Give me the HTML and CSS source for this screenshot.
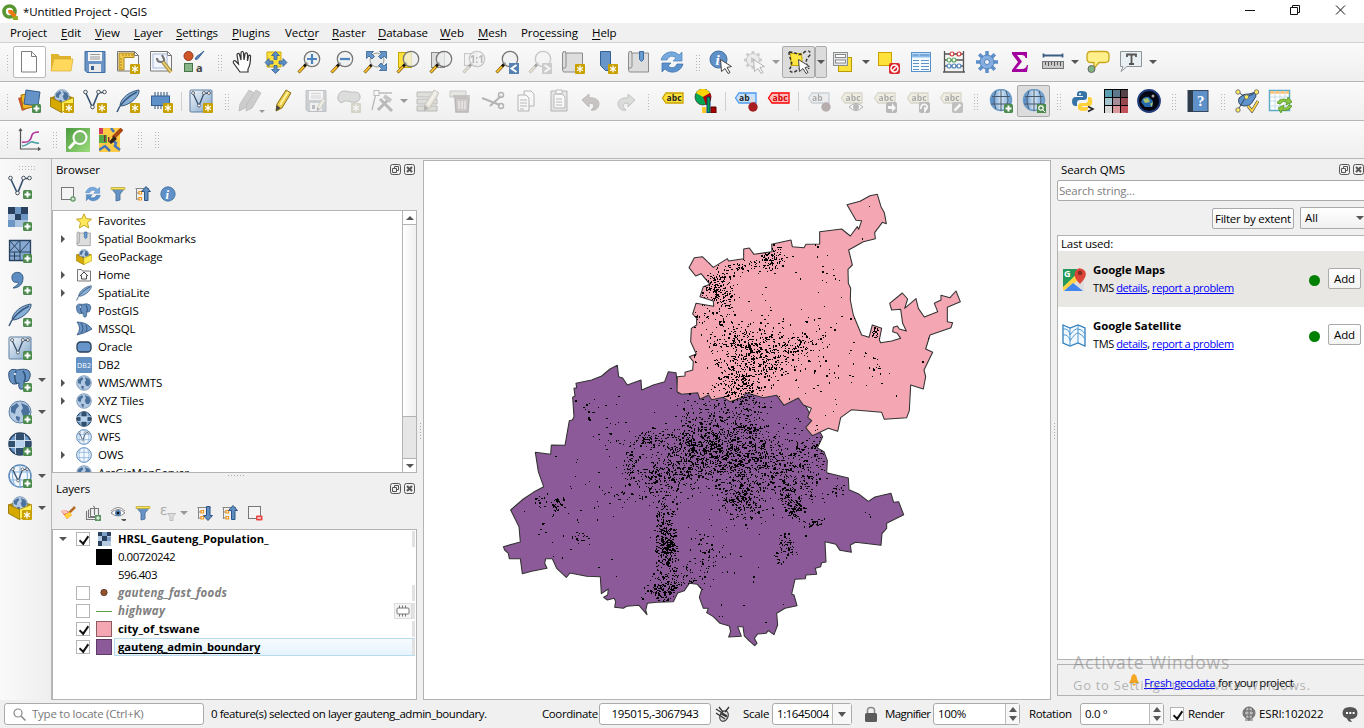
FILE: index.html
```html
<!DOCTYPE html>
<html lang="en">
<head>
<meta charset="utf-8">
<title>*Untitled Project - QGIS</title>
<link rel="stylesheet" href="styles.css">
</head>
<body>
<svg class="defs" aria-hidden="true">
<defs>
<linearGradient id="gGreen" x1="0" y1="0" x2="1" y2="1"><stop offset="0" stop-color="#4b9a3f"/><stop offset="1" stop-color="#9bdc7c"/></linearGradient>
<linearGradient id="gBlue" x1="0" y1="0" x2="1" y2="1"><stop offset="0" stop-color="#f4f8fb"/><stop offset="1" stop-color="#7fa3c8"/></linearGradient>
<linearGradient id="gGlobe"><stop offset="0" stop-color="#3f7fc4"/><stop offset=".5" stop-color="#d9e6f2"/><stop offset="1" stop-color="#5f9ad6"/></linearGradient>
</defs>
<symbol id="star" viewBox="0 0 24 24"><rect x="14" y="14" width="10" height="10" rx="1" fill="#c8a100"/><path d="M19 15.500v7M16 17.200l6 3.600M16 20.800l6-3.600" stroke="#fff" stroke-width="1.300"/></symbol>
<symbol id="plus" viewBox="0 0 24 24"><rect x="15" y="15" width="9" height="9" rx="1.500" fill="#4d8a4d"/><path d="M19.500 16.500v6M16.500 19.500h6" stroke="#fff" stroke-width="2"/></symbol>
<symbol id="new" viewBox="0 0 24 24"><path d="M4.500 1.500h10l5 5v15.500h-15z" fill="#fff" stroke="#7d7d7d"/><path d="M14.500 1.500v5h5" fill="none" stroke="#7d7d7d"/></symbol>
<symbol id="open" viewBox="0 0 24 24"><path d="M1 21V4h7l2 2h11v15z" fill="#e0b32f"/><path d="M1 21L4 9h19l-2 12z" fill="#ffd85c" stroke="#d9ae30" stroke-width=".7"/></symbol>
<symbol id="save" viewBox="0 0 24 24"><path d="M2 1.500h20v21H4l-2-2z" fill="#6b94c4" stroke="#3e6da3"/><rect x="5" y="2" width="14" height="9" fill="#f4f4f4"/><path d="M7 4.500h10M7 7h10M7 9h10" stroke="#999"/><rect x="6" y="14" width="12" height="8" fill="#e9e9e9"/><rect x="8" y="16" width="3" height="4" fill="#345f90"/></symbol>
<symbol id="page" viewBox="0 0 24 24"><path d="M1.500 1.500h17l4 4v15.500h-21z" fill="#f8f9fb" stroke="#777"/><path d="M18.500 1.500v4h4" fill="none" stroke="#777"/></symbol>
<symbol id="layoutnew" viewBox="0 0 24 24"><use href="#page"/><path d="M3 3h15v4.500H8V20H3z" fill="#f2c94a" stroke="#a9861f"/><path d="M7 4v2M10 4v2M13 4v2M16 4v2M4 9h2M4 12h2M4 15h2M4 18h2" stroke="#8a6c12" stroke-width=".7"/><use href="#star"/></symbol>
<symbol id="layoutmgr" viewBox="0 0 24 24"><use href="#page"/><rect x="4" y="4" width="14" height="14" fill="#f3f6ff" stroke="#a7b8d6"/><path d="M8 8q0 4 4 4t3-3l-2-4" fill="none" stroke="#777" stroke-width="2.200"/><path d="M14 12l8 10" stroke="#a78d3b" stroke-width="4"/><path d="M14 12l8 10" stroke="#e7cd76" stroke-width="2"/></symbol>
<symbol id="style" viewBox="0 0 24 24"><circle cx="6.500" cy="6" r="4.500" fill="#cf5428" stroke="#903414"/><path d="M13 9c2-3 2-3 4-4l5-4-4 5c-2 3-3 4-5 3" fill="#5586bd" stroke="#315f92"/><rect x="2.500" y="13.500" width="8" height="8" fill="#87b588" stroke="#44754a"/><text x="14" y="22" font-size="11" fill="#444">a</text></symbol>
<symbol id="hand" viewBox="0 0 24 24"><path d="M9 22L2.500 13c-1-2 1-3 2-2l3 3L6 5c0-2 2-2 2.500-.5L10 10V3c0-2 2.500-2 2.500 0l.5 7 1-6c.5-2 2.500-1 2.500.5L16.500 11l1-5c1-1.500 2.500-.5 2 1 0 4 0 8-2.500 12v3H9z" fill="#fff" stroke="#333" stroke-width="1.200"/></symbol>
<symbol id="pansel" viewBox="0 0 24 24"><path d="M3 2h14v15H3z" fill="#ffe13b" stroke="#cba800"/><path d="M11.500 1.500l4 4H13v4h-3v-4H7.500zM23 12.500l-4 4V14h-4v-3h4V8.500zM11.500 23.500l-4-4H10v-4h3v4h2.500zM1 12.500l4-4V11h4v3H5v2.500z" fill="#5d8fc7" stroke="#35618f" stroke-width=".8"/></symbol>
<symbol id="lens" viewBox="0 0 24 24"><path d="M9.500 14L1.500 22.500" stroke="#6b4c00" stroke-width="3"/><path d="M8.500 15L1.800 22.200" stroke="#ffc42e" stroke-width="1.800"/><path d="M10.500 12.500L7 16.500" stroke="#111" stroke-width="2.500"/><circle cx="15" cy="9" r="7.700" fill="#edf0ef" fill-opacity=".75" stroke="#777" stroke-width="1.300"/></symbol>
<symbol id="zoomin" viewBox="0 0 24 24"><use href="#lens"/><path d="M15 4v10M10 9h10" stroke="#4f83bd" stroke-width="2.200"/></symbol>
<symbol id="zoomout" viewBox="0 0 24 24"><use href="#lens"/><path d="M10 9h10" stroke="#4f83bd" stroke-width="2.200"/></symbol>
<symbol id="zoomfull" viewBox="0 0 24 24"><path d="M8.500 15L1.500 22.500" stroke="#6b4c00" stroke-width="3"/><path d="M8 15.500L1.800 22.200" stroke="#ffc42e" stroke-width="1.800"/><path d="M10.500 12.500L7 16.500" stroke="#111" stroke-width="2.500"/><circle cx="14" cy="10" r="7" fill="#eceeee" stroke="#999"/><path d="M3.500 1.500h7L8.500 3.500l3 3-2.500 2.500-3-3-2.500 2.500zM23.500 1.500h-7l2 2-3 3 2.500 2.500 3-3 2.500 2.500zM23.500 20.500h-7l2-2-3-3 2.500-2.500 3 3 2.500-2.500z" fill="#6594c9" stroke="#34618f" stroke-width=".8"/></symbol>
<symbol id="zoomsel" viewBox="0 0 24 24"><rect x="2.500" y="2.500" width="13" height="15" fill="#ffe13b" stroke="#c7a400"/><use href="#lens"/></symbol>
<symbol id="zoomlayer" viewBox="0 0 24 24"><rect x="2.500" y="2.500" width="13" height="15" fill="#ddd" stroke="#888"/><use href="#lens"/></symbol>
<symbol id="native" viewBox="0 0 24 24"><rect x="2.500" y="3.500" width="12" height="12" fill="#eee" stroke="#777"/><use href="#lens"/><text x="8" y="13" font-size="10" font-weight="bold" fill="#444" textLength="14">1:1</text></symbol>
<symbol id="zoomlast" viewBox="0 0 24 24"><use href="#lens"/><rect x="14" y="13" width="10" height="11" fill="#5581b2"/><path d="M21.500 15l-5 3.500 5 3.500" fill="none" stroke="#fff" stroke-width="2"/></symbol>
<symbol id="zoomnext" viewBox="0 0 24 24"><use href="#lens"/><rect x="14" y="13" width="10" height="11" fill="#888"/><path d="M16.500 15l5 3.500-5 3.500" fill="none" stroke="#fff" stroke-width="2"/></symbol>
<symbol id="book" viewBox="0 0 24 24"><path d="M1.500 4q0-3 2-2.500h1V3h17v19h-19q-1-1-1-3z" fill="#ddd" stroke="#8b8b8b"/><path d="M5 3v13.500q0 1.500-2 1.500-1.500 0-1.500 1.500" fill="none" stroke="#8b8b8b"/></symbol>
<symbol id="mapview" viewBox="0 0 24 24"><use href="#book"/><use href="#star"/></symbol>
<symbol id="bmnew" viewBox="0 0 24 24"><path d="M6.500 1.500h10v19h-5l-5-5z" fill="#6795c9" stroke="#345f91"/><use href="#star"/></symbol>
<symbol id="bookmarks" viewBox="0 0 24 24"><use href="#book"/><path d="M12.500 1.500h4v8l-2 2-2-2z" fill="#679bd1" stroke="#3a6c9f"/></symbol>
<symbol id="refresh" viewBox="0 0 24 24"><path d="M1 10C3 2 13-1 19 5l3-3v9h-9l3-3c-4-3-7-2-9 2z" fill="#77a9dc" stroke="#4a82ba" stroke-width=".7"/><path d="M23 14c-2 8-12 11-18 5l-3 3v-9h9l-3 3c4 3 7 2 9-2z" fill="#5c92cc" stroke="#376fa9" stroke-width=".7"/></symbol>
<symbol id="cursor" viewBox="0 0 24 24"><path d="M11.500 9.500l11 7-4.500 1 3 5-2 1-3-5-3.500 3z" fill="#fff" stroke="#444"/></symbol>
<symbol id="infoc" viewBox="0 0 24 24"><circle cx="9.500" cy="9.500" r="8.500" fill="#5f91c8" stroke="#3d6c9f"/><text x="6.500" y="15" font-size="15" font-style="italic" font-weight="bold" class="serif" fill="#fff">i</text></symbol>
<symbol id="identify" viewBox="0 0 24 24"><use href="#infoc"/><use href="#cursor"/></symbol>
<symbol id="action" viewBox="0 0 24 24"><path d="M11 1v18M2 10h18M4.600 3.600l12.800 12.800M17.400 3.600L4.600 16.400" stroke="#888" stroke-width="3"/><circle cx="11" cy="10" r="6.500" fill="#ddd" stroke="#777"/><path d="M9 7l5 3-5 3z" fill="#777"/><use href="#cursor"/></symbol>
<symbol id="select" viewBox="0 0 24 24"><path d="M3.500 3.500h11l1 12H4z" fill="#ffe53f" stroke="#c7a500"/><path d="M2 2q5 0 8 2t9-3q5-1 4 4-4 4-4 8l3 6M2 2q0 4 2 8t-2 10q3 4 7 1l5-3" fill="none" stroke="#333" stroke-width="1.500" stroke-dasharray="3 2"/><use href="#cursor"/></symbol>
<symbol id="selform" viewBox="0 0 24 24"><rect x="7.500" y="7.500" width="13" height="14" fill="#ffe13b" stroke="#b89b00"/><rect x="2.500" y="2.500" width="14" height="13" fill="#e3e5e6" stroke="#8a8f91"/><rect x="4.500" y="4.500" width="10" height="3" fill="#fff" stroke="#888"/><rect x="4.500" y="10" width="10" height="3" fill="#fff" stroke="#888"/></symbol>
<symbol id="desel" viewBox="0 0 24 24"><rect x="2.500" y="2.500" width="13" height="13" fill="#ffe13b" stroke="#c9a200"/><rect x="13" y="13" width="11" height="11" rx="2" fill="#dc2930"/><circle cx="18.500" cy="18.500" r="3.500" fill="none" stroke="#fff" stroke-width="1.500"/><path d="M16 21l5-5" stroke="#fff" stroke-width="1.500"/></symbol>
<symbol id="table" viewBox="0 0 24 24"><rect x="2.500" y="2.500" width="19" height="19" fill="#f5fbff" stroke="#5a91c8"/><path d="M3 5.500h18" stroke="#8fbdea" stroke-width="4"/><path d="M4 5h5M11 5h9M4 10.500h6M12 10.500h8M4 13.500h6M12 13.500h8M4 16.500h6M12 16.500h8M4 19.500h6M12 19.500h8" stroke="#5c92c7"/></symbol>
<symbol id="abacus" viewBox="0 0 24 24"><path d="M2.500 1v21M21.500 1v21M2 4h20M2 10h20M2 16h20M1 22h22" stroke="#555" stroke-width="1.300"/><g stroke-width="1.200"><circle cx="10" cy="4" r="2" fill="#fff" stroke="#c33"/><circle cx="17" cy="4" r="2" fill="#fff" stroke="#c33"/><circle cx="7" cy="10" r="2" fill="#fff" stroke="#5aa75a"/><circle cx="12" cy="10" r="2" fill="#fff" stroke="#5aa75a"/><circle cx="7" cy="16" r="2" fill="#fff" stroke="#4d84bd"/><circle cx="12" cy="16" r="2" fill="#fff" stroke="#4d84bd"/><circle cx="17" cy="16" r="2" fill="#fff" stroke="#4d84bd"/></g></symbol>
<symbol id="gear" viewBox="0 0 24 24"><path d="M12 1v22M1 12h22M4.200 4.200l15.600 15.600M19.800 4.200L4.200 19.800" stroke="#5d8fc8" stroke-width="3.500"/><circle cx="12" cy="12" r="7" fill="#85ade0" stroke="#5084c0"/><circle cx="12" cy="12" r="2.500" fill="#f5f5f5" stroke="#5084c0"/></symbol>
<symbol id="sigma" viewBox="0 0 24 24"><path d="M4 2h15v6h-1.500q-.5-3-4-3H9l5 6.500L8 19h6q4 0 5-4h1l-1 7H4v-2l6-8-6-8z" fill="#a3009f"/></symbol>
<symbol id="measure" viewBox="0 0 24 24"><path d="M2 5.500h20M2.500 3.500v4M21.500 3.500v4" stroke="#3d5e82" stroke-width="1.800"/><rect x="1.500" y="11.500" width="21" height="7" fill="#c9c9c9" stroke="#777"/><path d="M4.500 12v3M7.500 12v4M10.500 12v3M13.500 12v4M16.500 12v3M19.500 12v4" stroke="#555"/></symbol>
<symbol id="tip" viewBox="0 0 24 24"><path d="M5 1.500h14q4 0 4 4v3q0 4-4 4h-6l-5 6v-6H5q-4 0-4-4v-3q0-4 4-4z" fill="#fff08b" stroke="#c7a719" stroke-width="1.300"/><circle cx="5.500" cy="19" r="3.500" fill="#7fb583" stroke="#666"/></symbol>
<symbol id="textan" viewBox="0 0 24 24"><path d="M1.500 1.500h21v15H8l-6 5 2-5H1.500z" fill="#e8f0f3" stroke="#8e9597"/><path d="M8 7V4.500h9V7M12.500 4v10M10 14h5" fill="none" stroke="#555" stroke-width="1.800"/></symbol>
<symbol id="dsm" viewBox="0 0 24 24"><path d="M1 9l10-3 4 12-10 4z" fill="#c8532d"/><path d="M4 6l10-2 2 14-10 2z" fill="#f0b82a" stroke="#a97600"/><path d="M9 1l14 2-2 14-14-2z" fill="#6693c7" stroke="#355f8d"/><use href="#plus"/></symbol>
<symbol id="world" viewBox="0 0 24 24"><circle cx="12" cy="12" r="11" fill="#b3c9e2" stroke="#5f82a8"/><path d="M3 7l6-4 2 3-3 3-1 5-4-2zM13 3l7 3 2 6-3 5-4-1-2-5 2-3zM8 16l4 1-1 5-3-3z" fill="#4a709c"/></symbol>
<symbol id="gpkg" viewBox="0 0 24 24"><path d="M.5 8.500L12 4l11.500 4.500L12 14z" fill="#b08a00"/><use href="#world" x="4" y="0" width="16" height="16"/><path d="M.5 8.500l11 5v10l-11-6z" fill="#d6a900" stroke="#8b6900" stroke-width=".8"/><path d="M23.500 8.500l-12 5v10l12-6z" fill="#ffed52" stroke="#a58200" stroke-width=".8"/></symbol>
<symbol id="gpkgnew" viewBox="0 0 24 24"><use href="#gpkg"/><use href="#star"/></symbol>
<symbol id="vee" viewBox="0 0 24 24"><path d="M2.500 3.500l7 15 6-15h6" fill="none" stroke="#35516f" stroke-width="1.600"/><g fill="#fff" stroke="#48515b"><circle cx="2.500" cy="3" r="1.800"/><circle cx="15.500" cy="3" r="1.800"/><circle cx="21.500" cy="3" r="1.800"/><circle cx="9.500" cy="18" r="1.800"/></g></symbol>
<symbol id="veenew" viewBox="0 0 24 24"><use href="#vee"/><use href="#star"/></symbol>
<symbol id="veeadd" viewBox="0 0 24 24"><use href="#vee"/><use href="#plus"/></symbol>
<symbol id="feather" viewBox="0 0 24 24"><path d="M4 16C5 9 14 2 23 1c1 5-7 14-17 16z" fill="#87aed6" stroke="#38597d"/><path d="M1 23C4 15 12 7 21 3" fill="none" stroke="#38597d" stroke-width="1.500"/></symbol>
<symbol id="feathernew" viewBox="0 0 24 24"><use href="#feather"/><use href="#star"/></symbol>
<symbol id="featheradd" viewBox="0 0 24 24"><use href="#feather"/><use href="#plus"/></symbol>
<symbol id="chip" viewBox="0 0 24 24"><path d="M6 3v17M9 3v17M12 3v17M15 3v17M18 3v17" stroke="#4c6a8a" stroke-width="1.200"/><rect x="2.500" y="7" width="18" height="9.500" fill="#5e90c8" stroke="#345f8f"/><use href="#star"/></symbol>
<symbol id="virt" viewBox="0 0 24 24"><rect x="1" y="1" width="22" height="22" rx="1" fill="url(#gBlue)" stroke="#5d7fa3"/><use href="#vee" x="2" y="1" width="20" height="21"/></symbol>
<symbol id="virtnew" viewBox="0 0 24 24"><use href="#virt"/><use href="#star"/></symbol>
<symbol id="virtadd" viewBox="0 0 24 24"><use href="#virt"/><use href="#plus"/></symbol>
<symbol id="pencil" viewBox="0 0 24 24"><path d="M5 22l1-7L15 1l5 3L11 19z" fill="#e7c744" stroke="#8b721b"/><path d="M9 16L17 3" stroke="#fff29c" stroke-width="2"/><path d="M5 22l.5-6 4 3z" fill="#444"/></symbol>
<symbol id="pencils" viewBox="0 0 24 24"><g fill="#888" stroke="#666"><path d="M1 22l1-7L11 1l5 3L7 19z"/><path d="M8 22l1-7L18 1l5 3-9 15z"/></g></symbol>
<symbol id="saveedit" viewBox="0 0 24 24"><use href="#save"/><use href="#pencil" x="10" y="9" width="14" height="14"/></symbol>
<symbol id="addpoly" viewBox="0 0 24 24"><path d="M1 8c1-8 9-6 12-5s9-2 10 4-6 7-9 6-5-2-8 0-6-2-5-5z" fill="#9b9" stroke="#555"/><use href="#star"/></symbol>
<symbol id="vertex" viewBox="0 0 24 24"><path d="M2 21L6 4h16" fill="none" stroke="#555" stroke-width="1.300"/><rect x="4" y="1.500" width="5" height="5" fill="#fff" stroke="#555"/><path d="M8 21L20 9M10 10l12 12" stroke="#555" stroke-width="3"/><path d="M14 7l7 5" stroke="#777" stroke-width="4"/></symbol>
<symbol id="modattr" viewBox="0 0 24 24"><path d="M2 3h20v5H2zM2 10h20v5H2zM2 17h20v5H2z" fill="#b9bd74" stroke="#555"/><use href="#pencil" x="4"/></symbol>
<symbol id="trash" viewBox="0 0 24 24"><path d="M2 2h16v6H2z" fill="#cc9" stroke="#777"/><path d="M5 7h17M7 9h14l-1 14H8z" fill="#a77" stroke="#844" stroke-width="1.500"/><path d="M11 12v8M14 12v8M17 12v8" stroke="#fff"/></symbol>
<symbol id="cut" viewBox="0 0 24 24"><path d="M1 9l18 7M9 17L20 7" fill="none" stroke="#444" stroke-width="2"/><circle cx="20" cy="6" r="2.500" fill="none" stroke="#444" stroke-width="1.500"/><circle cx="20" cy="17" r="2.500" fill="none" stroke="#444" stroke-width="1.500"/></symbol>
<symbol id="copy" viewBox="0 0 24 24"><path d="M10 2h7l3 3v12H10z" fill="#fff" stroke="#444"/><path d="M4 6h8l3 3v13H4z" fill="#fff" stroke="#444"/><path d="M6 11h7M6 14h7M6 17h7M6 20h4" stroke="#555"/></symbol>
<symbol id="paste" viewBox="0 0 24 24"><path d="M4 2h16v20H4z" fill="#ccc" stroke="#444"/><path d="M7 5h8l3 3v11H7zM9 1h6v4H9z" fill="#fff" stroke="#555"/><path d="M9 10h6M9 13h6M9 16h6" stroke="#555"/></symbol>
<symbol id="undo" viewBox="0 0 24 24"><path d="M2 11l7-6v4c8-1 12 4 9 9q-2 4-7 3c4-3 4-7-2-7v4z" fill="#a66" stroke="#744"/></symbol>
<symbol id="redo" viewBox="0 0 24 24"><path d="M22 11l-7-6v4c-8-1-12 4-9 9q2 4 7 3c-4-3-4-7 2-7v4z" fill="#9b9" stroke="#575"/></symbol>
<symbol id="tag" viewBox="0 0 24 24"><path d="M1.500 9L5 4h17v10H5z" fill="#ffe43c" stroke="#c8a100" stroke-width="1.300"/><text x="5.500" y="12" font-size="8.500" font-weight="bold" fill="#222" textLength="15">abc</text></symbol>
<symbol id="tagred" viewBox="0 0 24 24"><path d="M1.500 9L5 4h17v10H5z" fill="#ffbcbc" stroke="#f00" stroke-width="1.300"/><text x="5.500" y="12" font-size="8.500" font-weight="bold" fill="#d20000" textLength="15">abc</text></symbol>
<symbol id="tagblue" viewBox="0 0 24 24"><path d="M1.500 9L5 4h17v10H5z" fill="#c7e2ff" stroke="#4f9aec" stroke-width="1.300"/><text x="5" y="12" font-size="8.500" font-weight="bold" fill="#222">ab</text><path d="M18 8v10" stroke="#ddd" stroke-width="3"/><circle cx="19" cy="18" r="4.700" fill="#a81d20"/></symbol>
<symbol id="tageye" viewBox="0 0 24 24"><use href="#tag"/><path d="M9 18q7-7 14 0-7 7-14 0z" fill="#fff" stroke="#333"/><circle cx="16" cy="18" r="3" fill="#555"/></symbol>
<symbol id="tagmove" viewBox="0 0 24 24"><use href="#tag"/><rect x="13" y="13" width="11" height="11" rx="2" fill="#555"/><path d="M15 17h4v-3l4 5-4 4v-3h-4z" fill="#fff"/></symbol>
<symbol id="tagrot" viewBox="0 0 24 24"><use href="#tag"/><rect x="13" y="13" width="11" height="11" rx="2" fill="#555"/><path d="M15 20c-1-7 8-5 6-1l-2 3v-4" fill="none" stroke="#fff" stroke-width="1.800"/></symbol>
<symbol id="tagedit" viewBox="0 0 24 24"><use href="#tag"/><rect x="13" y="13" width="11" height="11" rx="2" fill="#665"/><path d="M15.500 21.500l6-6" stroke="#fff" stroke-width="2.500"/></symbol>
<symbol id="diagram" viewBox="0 0 24 24"><circle cx="9" cy="8" r="8" fill="#00a651" stroke="#333" stroke-width=".7"/><path d="M9 8L2 4A8 8 0 0 1 16 4z" fill="#ffd400"/><path d="M9 8l7-4a8 8 0 0 1-4 12z" fill="#c00000"/><path d="M8 18h4v6H8z" fill="#ffc72c"/><path d="M13 8h3v16h-3z" fill="#00a651" stroke="#036"/><path d="M17 18h5v6h-5z" fill="#a80000" stroke="#500"/></symbol>
<symbol id="earth" viewBox="0 0 24 24"><circle cx="12" cy="11" r="10.500" fill="url(#gGlobe)" stroke="#6d9bc8" stroke-width="1.500"/><path d="M3 7.500h18M2 15h20M12 1v21M7 2q-4 9 0 18M17 2q4 9 0 18" fill="none" stroke="#46596c"/></symbol>
<symbol id="earthadd" viewBox="0 0 24 24"><use href="#earth"/><use href="#plus"/></symbol>
<symbol id="earthq" viewBox="0 0 24 24"><use href="#earth"/><rect x="15" y="15" width="9" height="9" fill="#4d8a4d"/><circle cx="19" cy="19" r="2.200" fill="none" stroke="#fff" stroke-width="1.200"/><path d="M21 21l2 2" stroke="#fff"/></symbol>
<symbol id="python" viewBox="0 0 24 24"><path d="M11 2c-5 0-5 1-5 5h6v1H4c-4 0-4 9 0 9h2v-3q0-3 3-3h4q3 0 3-3V5q0-3-5-3z" fill="#3674a7"/><path d="M12 22c5 0 5-1 5-4h-6v-1h8c3 0 3-9 0-9h-2v3q0 3-3 3h-4q-3 0-3 3v2q0 3 5 3z" fill="#ffd23d"/><circle cx="9" cy="5" r="1" fill="#fff"/><path d="M17 17.500l5 2.500-5 2.500" fill="none" stroke="#222" stroke-width="1.500"/></symbol>
<symbol id="matrix" viewBox="0 0 24 24"><path d="M0 0h24v24H0z" fill="#000"/><path d="M1 1h7v7H1z" fill="#58a0b1"/><path d="M9 1h7v7H9z" fill="#5d7888"/><path d="M17 1h7v7h-7z" fill="#554248"/><path d="M1 9h7v7H1z" fill="#a3c5cd"/><path d="M9 9h7v7H9z" fill="#a68e98"/><path d="M17 9h7v7h-7z" fill="#95484e"/><path d="M1 17h7v7H1z" fill="#d8d8d8"/><path d="M9 17h7v7H9z" fill="#d99a9c"/><path d="M17 17h7v7h-7z" fill="#c15259"/></symbol>
<symbol id="space" viewBox="0 0 24 24"><circle cx="12" cy="12" r="11" fill="#050812" stroke="#223c7c" stroke-width="1.800"/><path d="M4 13q2-6 8-5l4 4-1 6-7 0z" fill="#276bae"/><path d="M6 10l5-1 2 4-5 1zM13 15l3-2-1 5z" fill="#a8c46c"/><circle cx="16" cy="7" r="1.500" fill="#aaa"/></symbol>
<symbol id="help" viewBox="0 0 24 24"><rect x="2" y="1.500" width="20" height="21" fill="#5f91c9" stroke="#34475e"/><path d="M2 1h5v22H2z" fill="#2f3d4b"/><text x="11" y="17" font-size="15" class="serif" fill="#fff">?</text></symbol>
<symbol id="topo" viewBox="0 0 24 24"><path d="M4 9q5-5 10-4l7-2q1 5-3 9-2 5-9 5-7-1-5-8z" fill="#5f93cd" stroke="#34475e"/><path d="M3 21l7-12 12-6M3 3l6 4" fill="none" stroke="#34475e"/><g fill="#ffee58" stroke="#777"><circle cx="3" cy="3" r="2.200"/><circle cx="21.500" cy="3" r="2.200"/><circle cx="3" cy="21" r="2.200"/><circle cx="11.500" cy="8" r="2.200"/></g><path d="M13 17l4 5 6-10" fill="none" stroke="#555" stroke-width="3"/><path d="M13 17l4 5 6-10" fill="none" stroke="#ffd83e" stroke-width="1.700"/></symbol>
<symbol id="sheet" viewBox="0 0 24 24"><rect x="1.500" y="1.500" width="20" height="20" fill="#fff" stroke="#5daac7" stroke-width="1.500"/><path d="M2 3.500h19" stroke="#ffc16b" stroke-width="2.500"/><path d="M2 8h19M2 12h19M2 17h19M7 2v19M12 2v19M17 2v19" stroke="#c7dce7"/><path d="M9 14q4-6 10-3l1-3 4 5-6 3 1-3q-4-2-7 2zM24 17q-4 6-10 4l-1 3-3-5 6-3-1 3q4 1 6-3z" fill="#8dc63f" stroke="#4c931a" stroke-width=".8"/></symbol>
<symbol id="chart" viewBox="0 0 24 24"><path d="M3.500 1v20H23M2 3l1.500-2L5 3M21 19.500l2 1.500-2 1.500" fill="none" stroke="#555" stroke-width="1.200"/><path d="M5 14c7 1 9-2 10-7q1-3 7-3" fill="none" stroke="#b0319b" stroke-width="1.600"/><path d="M5 18c5 0 6-3 9-4s4 2 8 1" fill="none" stroke="#4ba3a8" stroke-width="1.600"/></symbol>
<symbol id="qms" viewBox="0 0 24 24"><path d="M0 0h24v24H0z" fill="url(#gGreen)"/><circle cx="14" cy="9.500" r="6.500" fill="#79ba67" stroke="#fff" stroke-width="2"/><path d="M9 14l-6 6.500" stroke="#fff" stroke-width="3"/></symbol>
<symbol id="osm" viewBox="0 0 24 24"><path d="M0 0h21v24H0z" fill="#ffcb45"/><path d="M0 0h4v6H0z" fill="#d33b5c"/><path d="M0 7h8v8H0z" fill="#57a946"/><path d="M5 7h1.500v7H5zM9 9h1.500v5H9z" fill="#733"/><path d="M0 22l6-4 5 5M13 12l4 3-1 3 5 4M12 0l3 4" fill="none" stroke="#4676ba" stroke-width="2.500"/><path d="M23 1l-9 9" stroke="#a84916" stroke-width="4"/><path d="M15 8l-5 6 2 2 6-5z" fill="#312018"/></symbol>
<symbol id="raster" viewBox="0 0 24 24"><path d="M0 0h20v20H0z" fill="#a9c2df"/><path d="M0 0h7v7H0zM13 0h7v7h-7zM7 7h6v6H7z" fill="#29415f"/><path d="M7 0h6v7H7zM0 13h7v7H0zM13 7h7v6h-7z" fill="#6d96c4"/></symbol>
<symbol id="rasteradd" viewBox="0 0 24 24"><use href="#raster"/><use href="#plus"/></symbol>
<symbol id="mesh" viewBox="0 0 24 24"><path d="M1.500 1.500h21v20h-21z" fill="#88aad2" stroke="#29425f" stroke-width="1.300"/><path d="M1 13h22M12 1v20M1 1l11 12M12 1L1 13M23 1L12 13M6.500 13v8M1 17h11" stroke="#29425f"/><use href="#plus"/></symbol>
<symbol id="comma" viewBox="0 0 24 24"><path d="M4 7c-1-7 11-8 11 0 0 7-5 10-10 10 4-3 6-4 5-6-3 1-6 0-6-4z" fill="#5e8ec1" stroke="#345c86"/><use href="#plus"/></symbol>
<symbol id="pg" viewBox="0 0 24 24"><path d="M1 4q2-4 8-2 9-2 12 1 3 4-1 10l-4 1v4q0 4-4 3-2-2-1-6l-4 1C2 17 0 9 1 4z" fill="#6691c0" stroke="#31547b"/><path d="M8 3q-3 8 1 13M15 3q4 6 1 11" fill="none" stroke="#31547b" stroke-width="1.500"/><circle cx="7" cy="6" r="1" fill="#fff"/></symbol>
<symbol id="pgadd" viewBox="0 0 24 24"><use href="#pg"/><use href="#plus"/></symbol>
<symbol id="worldadd" viewBox="0 0 24 24"><use href="#world"/><use href="#plus"/></symbol>
<symbol id="wcs" viewBox="0 0 24 24"><circle cx="12" cy="12" r="11" fill="#6c9aca" stroke="#29415e" stroke-width="1.500"/><path d="M7.500 3q4-3 9 0v5.500h-9zM7.500 16h9v5q-5 3-9 0zM1.500 9H7v6H1.500zM17 9h5.500v6H17z" fill="#31506f"/><path d="M8 9h8v6H8z" fill="#b8d2ed"/><path d="M1 8.500h22M1 15.500h22M7.500 2v20M16.500 2v20" stroke="#e8f1fa" stroke-width=".8"/></symbol>
<symbol id="wcsadd" viewBox="0 0 24 24"><use href="#wcs"/><use href="#plus"/></symbol>
<symbol id="ows" viewBox="0 0 24 24"><circle cx="12" cy="12" r="11" fill="#f1f7fd" stroke="#5a89b9" stroke-width="1.500"/><path d="M1 8h22M1 16h22M12 1v22M7 2q-5 10 0 20M17 2q5 10 0 20" fill="none" stroke="#8db4db" stroke-width="1.200"/></symbol>
<symbol id="wfs" viewBox="0 0 24 24"><use href="#ows"/><use href="#vee" x="3" y="3" width="18" height="18"/></symbol>
<symbol id="wfsadd" viewBox="0 0 24 24"><use href="#wfs"/><use href="#plus"/></symbol>
<symbol id="fav" viewBox="0 0 16 16"><path d="M8 .8l2.200 4.900 5.300.5-4 3.500 1.200 5.300L8 12.300 3.300 15l1.200-5.300-4-3.500 5.300-.5z" fill="#ffe95b" stroke="#c2a524"/></symbol>
<symbol id="home" viewBox="0 0 16 16"><path d="M1.500 14V2.500h4l1 1.500h8v10z" fill="#f7f7f7" stroke="#777"/><path d="M4 9l4-4 4 4M5.500 8.500V12h5V8.500" fill="none" stroke="#444"/></symbol>
<symbol id="mssql" viewBox="0 0 16 16"><path d="M1 1q10 0 15 7-6 4-15 6 5-7 0-13z" fill="#6a94c3" stroke="#35577e" stroke-width=".8"/><path d="M5 2q4 6 0 10M10 4q2 4 0 7" stroke="#35577e" fill="none"/></symbol>
<symbol id="oracle" viewBox="0 0 16 16"><rect x="1" y="3" width="14" height="10" rx="3.500" fill="#6794ca" stroke="#293f58" stroke-width="1.300"/></symbol>
<symbol id="db2" viewBox="0 0 16 16"><rect width="16" height="16" rx="1.500" fill="#6290c5"/><text x="1" y="10.500" font-size="7" fill="#fff" textLength="14">DB2</text></symbol>
<symbol id="addsel" viewBox="0 0 16 16"><rect x="1.500" y="1.500" width="12" height="12" fill="#f4f4f4" stroke="#777"/><circle cx="13" cy="13" r="2.700" fill="#5d955d"/><path d="M11.500 13h3M13 11.500v3" stroke="#fff"/></symbol>
<symbol id="remove" viewBox="0 0 16 16"><rect x="1.500" y="1.500" width="12" height="12" fill="#f4f4f4" stroke="#777"/><rect x="9" y="10.500" width="6.500" height="5" rx="1" fill="#e74444"/><path d="M10.500 13h3.500" stroke="#fff" stroke-width="1.300"/></symbol>
<symbol id="filter" viewBox="0 0 16 16"><path d="M1 2h14L10 8v6l-4 1V8z" fill="#6794c6" stroke="#3f6894" stroke-width=".8"/><path d="M1 1.500h14v2H1z" fill="#ffe34f" stroke="#b89d20" stroke-width=".5"/></symbol>
<symbol id="collapse" viewBox="0 0 16 16"><path d="M.5 2.500H14M1.500 3v11M2 7h3M2 13h3" stroke="#888"/><path d="M4 5.500h2.500v2.500H4zM4 11.500h2.500v2.500H4z" fill="#fff" stroke="#f29618" stroke-width="1.200"/><path d="M11 .5l4.500 5H13V14.500H9.500V5.500H6.500z" fill="#5f8ec3" stroke="#2c5484"/></symbol>
<symbol id="expand" viewBox="0 0 16 16"><path d="M.5 2.500H14M1.500 3v11M2 7h3M2 13h3" stroke="#888"/><path d="M4 5.500h2.500v2.500H4zM4 11.500h2.500v2.500H4z" fill="#fff" stroke="#f29618" stroke-width="1.200"/><path d="M11 15.500l4.500-5H13V1.500H9.500v9H6.500z" fill="#5f8ec3" stroke="#2c5484"/></symbol>
<symbol id="brush" viewBox="0 0 16 16"><path d="M15 2l-6 6" stroke="#b36b22" stroke-width="2.500"/><path d="M1 6l5-1 6 5-5 4z" fill="#ed5147"/><path d="M4 10l6-3 2 3-5 4z" fill="#ffd13a"/><path d="M1 6l5-1 2 3-4 1z" fill="#f7c9bd"/></symbol>
<symbol id="group" viewBox="0 0 16 16"><path d="M1.500 6v8.500h9M3.500 4.500v8h9M5.500 3.500h8v8h-8zM9.500 10V3q0-2-1.500-2" fill="none" stroke="#777" stroke-width="1.100"/><rect x="10" y="10" width="6" height="6" fill="#5d955d"/><path d="M11 13h4M13 11v4" stroke="#fff"/></symbol>
<symbol id="eye" viewBox="0 0 16 16"><path d="M1 8q7-7 14 0-7 6-14 0zM1 6q7-7 14 0" fill="#fff" stroke="#888"/><circle cx="8" cy="8" r="3" fill="#4f7db0"/><circle cx="8" cy="8" r="1.300" fill="#111"/><path d="M11 14h6l-3 3z" fill="#555"/></symbol>
<symbol id="eps" viewBox="0 0 16 16"><text x="0" y="10" font-size="15" fill="#aaa">ε</text><path d="M7.500 8.500h8l-2.500 3v4h-3v-4z" fill="#ddd" stroke="#bbb"/></symbol>
<symbol id="ras16" viewBox="0 0 16 16"><path d="M2 1h13v14H2z" fill="#b6cae2"/><path d="M2 1h4v4H2zM11 1h4v4h-4zM6 5h5v5H6zM2 10h4v5H2z" fill="#29415e"/><path d="M6 1h5v4H6zM11 6h4v4h-4z" fill="#7da1ca"/></symbol>
<symbol id="float" viewBox="0 0 11 11"><rect x=".5" y=".5" width="10" height="10" rx="2" fill="none" stroke="#555"/><path d="M4.500 4.500v-2h4v4h-2M2.500 4.500h4v4h-4z" fill="none" stroke="#555"/></symbol>
<symbol id="close" viewBox="0 0 11 11"><rect x=".5" y=".5" width="10" height="10" rx="2" fill="none" stroke="#555"/><path d="M3 3l5 5M8 3L3 8" stroke="#555" stroke-width="2"/></symbol>
</svg>

<header class="titlebar">
  <svg class="logo" viewBox="0 0 16 16"><circle cx="7.500" cy="7.500" r="5.500" fill="#fff" stroke="#589632" stroke-width="3.700"/><path d="M10 10l6 2.500V16h-5z" fill="#93b023"/><path d="M6 6h4L14.500 11l-2.500 2.500L6.500 9z" fill="#ee7913"/></svg>
  <span class="caption">*Untitled Project - QGIS</span>
  <svg class="winbtns" viewBox="0 0 110 24"><path d="M3 11.500h10M50.500 8.500V6.500h7v7h-2M48.500 8.500h7v7h-7zM94 6.500l9 9M103 6.500l-9 9" fill="none" stroke="#111"/></svg>
</header>
<nav class="menubar">
  <span class="m1">Pro<u>j</u>ect</span><span class="m2"><u>E</u>dit</span><span class="m3"><u>V</u>iew</span><span class="m4"><u>L</u>ayer</span><span class="m5"><u>S</u>ettings</span><span class="m6"><u>P</u>lugins</span><span class="m7">Vect<u>o</u>r</span><span class="m8"><u>R</u>aster</span><span class="m9"><u>D</u>atabase</span><span class="m10"><u>W</u>eb</span><span class="m11"><u>M</u>esh</span><span class="m12">Pro<u>c</u>essing</span><span><u>H</u>elp</span>
</nav>

<div class="toolbar">
  <i class="grip first"></i>
  <b class="tb flat"><svg><use href="#new"/></svg></b><b class="tb"><svg><use href="#open"/></svg></b><b class="tb"><svg><use href="#save"/></svg></b><b class="tb"><svg><use href="#layoutnew"/></svg></b><b class="tb"><svg><use href="#layoutmgr"/></svg></b><b class="tb"><svg><use href="#style"/></svg></b>
  <i class="grip"></i>
  <b class="tb"><svg><use href="#hand"/></svg></b><b class="tb"><svg><use href="#pansel"/></svg></b><b class="tb"><svg><use href="#zoomin"/></svg></b><b class="tb"><svg><use href="#zoomout"/></svg></b><b class="tb"><svg><use href="#zoomfull"/></svg></b><b class="tb"><svg><use href="#zoomsel"/></svg></b><b class="tb"><svg><use href="#zoomlayer"/></svg></b><b class="tb off"><svg><use href="#native"/></svg></b><b class="tb"><svg><use href="#zoomlast"/></svg></b><b class="tb off"><svg><use href="#zoomnext"/></svg></b><b class="tb"><svg><use href="#mapview"/></svg></b><b class="tb"><svg><use href="#bmnew"/></svg></b><b class="tb"><svg><use href="#bookmarks"/></svg></b><b class="tb"><svg><use href="#refresh"/></svg></b>
  <i class="grip"></i>
  <b class="tb"><svg><use href="#identify"/></svg></b><b class="tb off"><svg><use href="#action"/></svg></b><b class="dd dim"></b><b class="tb on"><svg><use href="#select"/></svg></b><b class="dd on"></b><b class="tb"><svg><use href="#selform"/></svg></b><b class="dd"></b><b class="tb"><svg><use href="#desel"/></svg></b><b class="tb"><svg><use href="#table"/></svg></b><b class="tb"><svg><use href="#abacus"/></svg></b><b class="tb"><svg><use href="#gear"/></svg></b><b class="tb"><svg><use href="#sigma"/></svg></b><b class="tb"><svg><use href="#measure"/></svg></b><b class="dd"></b><b class="tb"><svg><use href="#tip"/></svg></b><b class="tb"><svg><use href="#textan"/></svg></b><b class="dd"></b>
</div>
<div class="toolbar">
  <i class="grip first"></i>
  <b class="tb"><svg><use href="#dsm"/></svg></b><b class="tb"><svg><use href="#gpkgnew"/></svg></b><b class="tb"><svg><use href="#veenew"/></svg></b><b class="tb"><svg><use href="#feathernew"/></svg></b><b class="tb"><svg><use href="#chip"/></svg></b><i class="sep"></i><b class="tb"><svg><use href="#virtnew"/></svg></b>
  <i class="grip"></i>
  <b class="tb off corner"><svg><use href="#pencils"/></svg></b><b class="tb"><svg><use href="#pencil"/></svg></b><b class="tb off"><svg><use href="#saveedit"/></svg></b><b class="tb off"><svg><use href="#addpoly"/></svg></b><b class="tb off"><svg><use href="#vertex"/></svg></b><b class="dd dim"></b><b class="tb off"><svg><use href="#modattr"/></svg></b><b class="tb off"><svg><use href="#trash"/></svg></b><b class="tb off"><svg><use href="#cut"/></svg></b><b class="tb off"><svg><use href="#copy"/></svg></b><b class="tb off"><svg><use href="#paste"/></svg></b><b class="tb off"><svg><use href="#undo"/></svg></b><b class="tb off"><svg><use href="#redo"/></svg></b>
  <i class="grip narrow"></i>
  <b class="tb"><svg><use href="#tag"/></svg></b><b class="tb"><svg><use href="#diagram"/></svg></b><i class="sep"></i><b class="tb"><svg><use href="#tagblue"/></svg></b><b class="tb"><svg><use href="#tagred"/></svg></b><i class="sep"></i><b class="tb off"><svg><use href="#tagblue"/></svg></b><b class="tb off"><svg><use href="#tageye"/></svg></b><b class="tb off"><svg><use href="#tagmove"/></svg></b><b class="tb off"><svg><use href="#tagrot"/></svg></b><b class="tb off"><svg><use href="#tagedit"/></svg></b>
  <i class="grip wide"></i>
  <b class="tb"><svg><use href="#earthadd"/></svg></b><b class="tb on round"><svg><use href="#earthq"/></svg></b>
  <i class="grip"></i>
  <b class="tb"><svg><use href="#python"/></svg></b><b class="tb"><svg><use href="#matrix"/></svg></b><b class="tb"><svg><use href="#space"/></svg></b>
  <i class="grip"></i>
  <b class="tb"><svg><use href="#help"/></svg></b>
  <i class="grip"></i>
  <b class="tb"><svg><use href="#topo"/></svg></b><b class="tb"><svg><use href="#sheet"/></svg></b>
</div>
<div class="toolbar third">
  <i class="grip first"></i><b class="tb"><svg><use href="#chart"/></svg></b><i class="grip"></i><b class="tb"><svg><use href="#qms"/></svg></b><b class="tb"><svg><use href="#osm"/></svg></b><i class="grip last"></i><i class="grip last"></i>
</div>

<main class="work">
  <aside class="sidebar">
    <i class="hgrip"></i>
    <div class="sb"><svg><use href="#veeadd"/></svg></div>
    <div class="sb"><svg><use href="#rasteradd"/></svg></div>
    <div class="sb"><svg><use href="#mesh"/></svg></div>
    <div class="sb"><svg><use href="#comma"/></svg></div>
    <div class="sb"><svg><use href="#featheradd"/></svg></div>
    <div class="sb"><svg><use href="#virtadd"/></svg></div>
    <div class="sb"><svg><use href="#pgadd"/></svg><b class="dd"></b></div>
    <div class="sb"><svg><use href="#worldadd"/></svg><b class="dd"></b></div>
    <div class="sb"><svg><use href="#wcsadd"/></svg></div>
    <div class="sb"><svg><use href="#wfsadd"/></svg><b class="dd"></b></div>
    <div class="sb"><svg><use href="#gpkgnew"/></svg><b class="dd"></b></div>
  </aside>

  <section class="docks">
    <div class="docktitle"><span>Browser</span><svg><use href="#float"/></svg><svg><use href="#close"/></svg></div>
    <div class="dockbar"><svg><use href="#addsel"/></svg><svg><use href="#refresh"/></svg><svg><use href="#filter"/></svg><svg><use href="#collapse"/></svg><svg viewBox="0 0 19 19"><use href="#infoc" width="24" height="24"/></svg></div>
    <div class="treebox browser">
      <ul class="tree">
        <li><i></i><svg><use href="#fav"/></svg>Favorites</li>
        <li><i class="arr"></i><svg><use href="#bookmarks"/></svg>Spatial Bookmarks</li>
        <li><i></i><svg><use href="#gpkg"/></svg>GeoPackage</li>
        <li><i class="arr"></i><svg><use href="#home"/></svg>Home</li>
        <li><i class="arr"></i><svg><use href="#feather"/></svg>SpatiaLite</li>
        <li><i></i><svg><use href="#pg"/></svg>PostGIS</li>
        <li><i></i><svg><use href="#mssql"/></svg>MSSQL</li>
        <li><i></i><svg><use href="#oracle"/></svg>Oracle</li>
        <li><i></i><svg><use href="#db2"/></svg>DB2</li>
        <li><i class="arr"></i><svg><use href="#world"/></svg>WMS/WMTS</li>
        <li><i class="arr"></i><svg><use href="#world"/></svg>XYZ Tiles</li>
        <li><i></i><svg><use href="#wcs"/></svg>WCS</li>
        <li><i></i><svg><use href="#wfs"/></svg>WFS</li>
        <li><i class="arr"></i><svg><use href="#ows"/></svg>OWS</li>
        <li><i></i><svg><use href="#world"/></svg>ArcGisMapServer</li>
      </ul>
      <div class="scroll"><b class="up"></b><b class="thumb"></b><b class="track"></b><b class="down"></b></div>
    </div>
    <div class="split"><i></i></div>
    <div class="docktitle"><span>Layers</span><svg><use href="#float"/></svg><svg><use href="#close"/></svg></div>
    <div class="dockbar layersbar"><svg><use href="#brush"/></svg><svg><use href="#group"/></svg><svg><use href="#eye"/></svg><svg><use href="#filter"/></svg><svg><use href="#eps"/></svg><b class="dd dim"></b><svg><use href="#expand"/></svg><svg><use href="#collapse"/></svg><svg><use href="#remove"/></svg></div>
    <div class="treebox layers">
      <ul class="tree ltree">
        <li class="bold"><i class="open"></i><b class="chk yes"></b><svg class="sym"><use href="#ras16"/></svg><span>HRSL_Gauteng_Population_</span><em></em></li>
        <li class="legend"><i class="sw black"></i>0.00720242</li>
        <li class="legend"><i class="sw"></i>596.403</li>
        <li class="hid"><i></i><b class="chk"></b><svg class="sym" viewBox="0 0 16 16"><circle cx="8" cy="7.500" r="3.200" fill="#91522d" stroke="#5b3b2b" stroke-width=".8"/></svg><span>gauteng_fast_foods</span><em></em></li>
        <li class="hid"><i></i><b class="chk"></b><svg class="sym" viewBox="0 0 16 16"><path d="M0 8.500h16" stroke="#5b9d48"/></svg><span>highway</span><svg class="mem" viewBox="0 0 18 16"><rect x=".5" y=".5" width="17" height="15" fill="#f4f4f4" stroke="#ddd"/><path d="M5.500 2.500v11M8.500 2.500v11M11.500 2.500v11" stroke="#777"/><rect x="3" y="5" width="12" height="6" rx="1" fill="#fff" stroke="#777"/></svg><em></em></li>
        <li class="bold"><i></i><b class="chk yes"></b><i class="sw pink"></i><span>city_of_tswane</span><em></em></li>
        <li class="bold cur"><i></i><b class="chk yes"></b><i class="sw purple"></i><span><u>gauteng_admin_boundary</u></span><em></em></li>
      </ul>
    </div>
  </section>
  <div class="vsplit"></div>

  <section class="canvas">
    <svg viewBox="424 161 626 538">
      <defs><clipPath id="land"><use href="#gauteng"/><use href="#tshwane"/></clipPath></defs>
      <path id="gauteng" transform="translate(490 180) scale(.33333)" class="region r1" d="M565 640L558 578 535 575 524 605 490 615 455 630 453 600 412 615 398 594 386 590 382 556 360 567 335 588 305 600 258 610 260 623 252 625 255 648 248 652 252 710 247 720 238 722 225 796 184 795 182 823 136 817 145 875 161 920 130 937 100 957 62 990 87 1040 91 1086 40 1100 44 1110 55 1120 58 1136 91 1136 97 1181 125 1174 171 1165 164 1150 167 1136 187 1136 200 1165 229 1192 240 1179 290 1189 331 1190 334 1241 355 1227 353 1245 341 1252 352 1260 372 1255 377 1264 374 1282 400 1285 410 1279 447 1276 471 1304 467 1290 472 1270 500 1267 550 1265 563 1239 583 1232 598 1210 622 1213 635 1228 628 1252 640 1285 655 1285 650 1298 670 1310 690 1330 718 1338 722 1355 716 1371 754 1369 750 1358 743 1340 759 1340 763 1368 777 1382 794 1397 801 1390 793 1375 803 1362 828 1360 835 1352 852 1364 863 1335 860 1300 885 1285 921 1277 912 1245 905 1242 915 1198 946 1196 948 1185 980 1183 976 1165 992 1160 995 1148 1008 1146 1005 1085 1038 1093 1050 1111 1084 1117 1081 1095 1097 1087 1173 1096 1176 1061 1190 1045 1190 1030 1241 1004 1226 965 1211 967 1203 940 1155 951 1135 964 1108 943 1077 929 1075 894 1010 878 1012 842 1002 815 982 804 998 770 980 740 930 645 740 600Z"/>
      <path id="tshwane" transform="translate(490 180) scale(.33333)" class="region r2" d="M561 635L562 590 585 588 585 577 608 570 610 545 598 530 619 522 602 485 604 445 620 435 620 415 608 402 618 370 671 379 670 363 630 350 640 320 660 313 633 281 617 288 597 263 613 233 637 230 670 262 712 236 716 243 761 236 761 207 778 204 792 223 846 215 845 193 903 180 907 200 942 203 948 193 989 192 989 155 1055 147 1081 168 1102 140 1106 148 1115 122 1098 121 1071 74 1110 64 1140 47 1162 43 1173 80 1183 98 1189 131 1177 127 1154 158 1156 176 1120 185 1076 210 1087 255 1074 268 1075 310 1082 325 1081 360 1090 405 1115 465 1137 472 1147 435 1175 445 1168 480 1172 488 1205 483 1232 475 1222 460 1208 455 1210 442 1222 438 1228 447 1249 453 1238 430 1232 388 1205 390 1199 370 1237 339 1253 357 1244 385 1278 356 1285 385 1303 411 1343 395 1333 370 1353 360 1353 346 1380 353 1398 333 1411 365 1372 382 1372 425 1388 428 1383 443 1320 465 1307 507 1328 517 1302 570 1307 590 1300 627 1262 615 1258 692 1250 713 1183 718 1175 697 1085 689 1052 713 1043 754 1015 745 967 767 947 743 965 722 953 712 964 685 940 675 925 654 882 676 860 646 820 653 767 638 762 650 720 665 700 652 665 659 656 645 630 658 623 638 575 643Z"/>
      <path id="population" clip-path="url(#land)" fill="#000" shape-rendering="crispEdges"/>
    </svg>
  </section>
  <div class="vsplit right"></div>

  <section class="qms">
    <div class="docktitle"><span>Search QMS</span><svg><use href="#float"/></svg><svg><use href="#close"/></svg></div>
    <div class="search">Search string...</div>
    <div class="filters"><span class="btn">Filter by extent</span><span class="combo">All<i></i></span></div>
    <div class="results">
      <p>Last used:</p>
      <article class="sel">
        <svg viewBox="0 0 24 24"><path d="M1 2h21v22H1z" fill="#ddd"/><path d="M1 2h14v9L1 22z" fill="#249a5a"/><path d="M22 9L1 24v-4L19 3z" fill="#ffd543"/><path d="M11 16l10 8H2z" fill="#4285ec"/><path d="M18 17q-7-7-5-12 4-7 10-1 3 5-5 13z" fill="#db4437"/><circle cx="18" cy="6" r="2.300" fill="#812d27"/><text x="2" y="10" font-size="9" font-weight="bold" fill="#fff">G</text></svg>
        <div><h4>Google Maps</h4><span>TMS <a>details</a>, <a>report a problem</a></span></div><i></i><span class="btn">Add</span>
      </article>
      <article>
        <svg viewBox="0 0 24 24"><path d="M1 2l7 3 8-3 7 3v18l-7-3-8 3-7-3z" fill="#f2f9ff" stroke="#307fbd" stroke-width="1.300"/><path d="M8 5v18M16 2v18M1 12q5-1 7 5M1 6q6-1 7 6 5-7 8-6M8 18q5-8 8-8 4 1 7 6M16 6q4 0 7 5" fill="none" stroke="#4f97cf"/></svg>
        <div><h4>Google Satellite</h4><span>TMS <a>details</a>, <a>report a problem</a></span></div><i></i><span class="btn">Add</span>
      </article>
    </div>
    <div class="promo"><svg viewBox="0 0 10 12"><path d="M5 0q3 1 3 5l2 4H0l2-4q0-4 3-5zM3 10h4L5 12z" fill="#f5a623"/></svg><a>Fresh geodata</a><span>for your project</span></div>
  </section>
</main>

<footer class="status">
  <span class="locate"><svg viewBox="0 0 13 13"><circle cx="5" cy="5" r="4" fill="none" stroke="#888" stroke-width="1.200"/><path d="M8 8l4.500 4.500" stroke="#888" stroke-width="1.500"/></svg>Type to locate (Ctrl+K)</span>
  <span class="msg">0 feature(s) selected on layer gauteng_admin_boundary.</span>
  <span class="lab1">Coordinate</span><span class="field coord">195015,-3067943</span>
  <svg class="mouse" viewBox="0 0 16 16"><ellipse cx="9" cy="10" rx="4" ry="5.500" transform="rotate(25 9 10)" fill="#ddd" stroke="#333"/><path d="M1 3l11 7M1 7l9 6M4 1l4 5M14 1l-4 5M6 8l6 3" stroke="#333" stroke-width="1.300"/></svg>
  <span class="lab2">Scale</span><span class="field scale">1:1645004<i></i></span>
  <svg class="lock" viewBox="0 0 12 16"><path d="M2.500 8V4.500q0-3 3.500-3t3.500 3V8" fill="none" stroke="#888" stroke-width="1.500"/><rect y="7" width="12" height="9" rx="1.500" fill="#5b5b5b"/></svg>
  <span class="lab3">Magnifier</span><span class="field spin mag">100%<i></i></span>
  <span class="lab4">Rotation</span><span class="field spin rot">0.0 °<i></i></span>
  <b class="chk yes"></b><span class="lab5">Render</span>
  <svg class="crs" viewBox="0 0 16 16"><circle cx="8" cy="7" r="6" fill="#bbb" stroke="#666"/><path d="M2 5h12M2 9h12M8 1v14M5 2q-3 5 0 10M11 2q3 5 0 10M4 14h8" fill="none" stroke="#666"/></svg>
  <span class="lab6">ESRI:102022</span>
  <svg class="bubble" viewBox="0 0 16 16"><path d="M8 1q7.500 0 7.500 6T8 13l2 3q-4 0-5-3.500Q.5 11 .5 7 .5 1 8 1z" fill="#555"/><path d="M4 6h2v2H4zM7.300 6h2v2h-2zM10.600 6h2v2h-2z" fill="#fff"/></svg>
</footer>

<div class="activate"><strong>Activate Windows</strong><span>Go to Settings to activate Windows.</span></div>
<script src="map.js"></script>
</body>
</html>
```
FILE: styles.css
```css
* { box-sizing: border-box; }
body {
  margin: 0; width: 1364px; height: 728px; overflow: hidden; position: relative;
  display: flex; flex-direction: column; background: #f0f0f0; color: #000;
  font: 11.5px/18px "Open Sans", "Noto Sans", sans-serif; letter-spacing: -.1px; white-space: nowrap;
}
svg { display: block; flex: none; overflow: visible; }
svg text { letter-spacing: 0; }
.serif { font-family: "Liberation Serif", serif; }
.defs { position: absolute; width: 0; height: 0; }
ul, p, h4 { margin: 0; padding: 0; list-style: none; }
u { text-underline-offset: 2px; }

.titlebar { height: 23px; flex: none; background: #fff; display: flex; align-items: center; padding-left: 2px; }
.logo { width: 16px; height: 16px; margin-right: 5px; }
.caption { flex: 1; }
.winbtns { width: 110px; height: 24px; margin: -2px 12px 0 0; }

.menubar { height: 20px; flex: none; display: flex; padding-left: 10px; border-bottom: 1px solid #d2d2d2; line-height: 19px; letter-spacing: -.08px; }
.m1 { width: 51px; } .m2 { width: 34px; } .m3 { width: 39px; } .m4 { width: 42px; }
.m5 { width: 56px; } .m6 { width: 53px; } .m7 { width: 47px; } .m8 { width: 46px; }
.m9 { width: 62px; } .m10 { width: 38px; } .m11 { width: 43px; } .m12 { width: 71px; }

.toolbar { height: 39px; flex: none; display: flex; align-items: center; border-bottom: 1px solid #b6b6b6; background: linear-gradient(#fafafa, #efefef); }
.toolbar.third { height: 38px; }
.tb { width: 33px; height: 32px; flex: none; display: flex; align-items: center; justify-content: center; position: relative; }
.tb svg { width: 24px; height: 24px; }
.tb.flat { background: #fff; border: 1px solid #b8b8b8; border-radius: 2px; }
.tb.on, .dd.on { background: #dcdcdc; border: 1px solid #aaa; border-radius: 2px; }
.tb.off svg { filter: grayscale(.8); opacity: .36; }
.corner::after { content: ""; position: absolute; right: 2px; bottom: 4px; border: 3px solid transparent; border-top: 3px solid #999; border-bottom: 0; }
.dd { width: 11.700px; height: 31px; flex: none; display: flex; align-items: center; justify-content: center; }
.dd.on { height: 32px; }
.dd::after { content: ""; border: 4px solid transparent; border-top: 4px solid #555; border-bottom: 0; }
.dd.dim::after { border-top-color: #999; }
.grip { width: 16px; height: 17px; flex: none; background: radial-gradient(circle, #b5b5b5 .6px, transparent .9px) 0 0 / 3px 3px; background-clip: content-box; padding: 0 5px 0 6px; }
.grip.first { width: 12.500px; padding: 0 3px 0 5px; }
.grip.wide { width: 17px; }
.grip.narrow { width: 15.300px; }
.grip.last { width: 17px; padding: 0 3px 0 9px; }
.sep { width: 7px; height: 19px; flex: none; border-left: 1px solid #d0d0d0; margin-left: 3px; margin-right: -3px; }

.work { flex: 1; min-height: 0; display: flex; }
.sidebar { width: 51px; flex: none; background: linear-gradient(90deg, #fafafa, #eee); padding-top: 6px; }
.hgrip { display: block; width: 17px; height: 6px; margin-left: 18px; background: radial-gradient(circle, #b5b5b5 .6px, transparent .9px) 0 0 / 3px 3px; }
.sb { height: 32.100px; display: flex; align-items: center; padding-left: 8px; }
.sb svg { width: 24px; height: 24px; margin-right: 4px; }

.docks { width: 366px; flex: none; display: flex; flex-direction: column; border-left: 1px solid #b9b9b9; }
.docktitle { height: 22px; flex: none; display: flex; align-items: center; padding: 0 2px 1px 4px; gap: 3px; }
.docktitle span { flex: 1; }
.docktitle svg { width: 11px; height: 11px; }
.dockbar { height: 29px; flex: none; display: flex; align-items: center; gap: 9px; padding: 0 0 3px 8px; }
.dockbar svg { width: 16px; height: 16px; }
.treebox { border: 1px solid #b3b3b3; background: #fff; overflow: hidden; display: flex; }
.browser { height: 263px; flex: none; }
.tree { flex: 1; padding-top: .5px; }
.tree li { height: 18px; display: flex; align-items: center; padding-left: 8px; }
.tree li > i { width: 15px; flex: none; }
.tree li > i.arr::after { content: ""; display: block; width: 0; border: 4px solid transparent; border-left: 4px solid #555; border-right: 0; }
.tree li > svg { width: 16px; height: 16px; margin-right: 6px; }
.scroll { width: 14px; border-left: 1px solid #b3b3b3; display: flex; flex-direction: column; }
.scroll b { display: block; }
.scroll .up, .scroll .down { height: 14px; display: flex; align-items: center; justify-content: center; }
.up { border-bottom: 1px solid #b3b3b3; } .down { border-top: 1px solid #b3b3b3; }
.up::after, .down::after { content: ""; border: 4px solid transparent; }
.up::after { border-top: 0; border-bottom-color: #555; }
.down::after { border-bottom: 0; border-top-color: #555; }
.thumb { height: 191px; background: linear-gradient(90deg, #fff, #f0f0f0); }
.track { flex: 1; border-top: 1px solid #b3b3b3; background: #e6e6e6; }
.split { height: 5px; flex: none; display: flex; justify-content: center; align-items: center; padding-left: 4px; }
.split i { width: 17px; height: 1px; background: repeating-linear-gradient(90deg, #aaa 0 1px, transparent 1px 3px); }
.layersbar .dd { width: 12px; margin: 0 -2px 0 -7px; }
.layers { flex: 1; }
.ltree { padding-top: 0; }
.ltree span { flex: 1; }
.ltree li > .sym { margin: 0 6px; }
.chk { width: 14px; height: 14px; flex: none; border: 1px solid #b5b5b5; background: #fff; position: relative; }
.chk.yes::after { content: ""; position: absolute; left: 4px; top: 1px; width: 4px; height: 8px; border: solid #111; border-width: 0 2px 2px 0; transform: rotate(35deg) skewY(8deg); }
.bold { font-weight: bold; font-size: 11.2px; letter-spacing: 0; }
.cur { letter-spacing: -.1px; }
.hid { font-weight: bold; font-style: italic; font-size: 11.5px; letter-spacing: .25px; color: #808080; }
.tree li > i.open::after { content: ""; display: block; width: 0; border: 4px solid transparent; border-top: 4px solid #555; border-bottom: 0; margin-left: -2px; }
.ltree li.legend { padding-left: 43px; letter-spacing: -.5px; }
.tree li > i.sw { width: 16px; height: 16px; margin: 0 6px; }
.tree li.legend > i.sw { margin-left: 0; }
.tree li > .black { background: #000; }
.tree li > .pink { background: #f4a6b2; border: 1px solid #8b5b63; }
.tree li > .purple { background: #8d5a99; border: 1px solid #5d3b66; }
.ltree em { width: 3px; height: 16px; background: #e2e2e2; margin-right: 1px; }
.tree li > .mem { width: 18px; height: 16px; margin-right: 0; }
.ltree .cur span { background: linear-gradient(#f7fcff, #e6f3fd); border: 1px solid #b9dbee; margin: 0 -3px 0 -4px; padding-left: 3px; line-height: 16px; }

.vsplit { width: 6px; flex: none; background: repeating-linear-gradient(#aaa 0 1px, #f0f0f0 1px 3px) 3px 264px / 1px 17px no-repeat; }
.canvas { width: 628px; flex: none; margin-top: 1px; height: 540px; border: 1px solid #b3b3b3; background: #fff; }
.canvas svg { width: 626px; height: 538px; overflow: hidden; }
.region { stroke: #333; stroke-width: 3.200; stroke-linejoin: round; }
.r1 { fill: #8d5a99; } .r2 { fill: #f4a6b2; }

.qms { width: 313px; flex: none; display: flex; flex-direction: column; overflow: hidden; }
.qms .docktitle { height: 21px; padding: 0 6px 0 4px; }
.search { height: 21px; flex: none; border: 1px solid #aaa; border-radius: 2px; background: #fff; color: #808080; line-height: 20px; padding-left: 1px; letter-spacing: -.2px; }
.filters { height: 34px; flex: none; display: flex; align-items: center; justify-content: flex-end; gap: 6px; }
.btn { border: 1px solid #aaa; border-radius: 2px; background: linear-gradient(#fff, #f3f3f3); height: 21px; line-height: 19px; text-align: center; flex: none; }
.filters .btn { width: 82px; letter-spacing: -.25px; }
.combo { width: 70px; height: 22px; border: 1px solid #aaa; border-right: 0; border-radius: 2px 0 0 2px; background: linear-gradient(#fff, #f0f0f0); display: flex; align-items: center; justify-content: space-between; padding: 0 6px 0 4px; }
.combo i { border: 4px solid transparent; border-top: 4px solid #555; border-bottom: 0; }
.results { height: 425px; flex: none; border: 1px solid #b3b3b3; background: #fff; }
.results p { height: 15px; line-height: 16px; padding-left: 3px; letter-spacing: -.2px; }
.results article { height: 56px; display: flex; align-items: center; padding: 0 0 1px 4px; }
.results article.sel { background: #e8e7e3; }
.results article > svg { width: 24px; height: 24px; margin-right: 7px; }
.results article div { flex: 1; }
.results article div span { font-size: 11px; letter-spacing: -.4px; display: block; }
.results h4 { font-size: 11.400px; line-height: 18px; letter-spacing: -.05px; }
.results article > i { width: 11px; height: 11px; border-radius: 50%; background: #008000; margin: 3px 8px 0 0; }
.results .btn { width: 33px; margin-right: 8px; }
.results a, .promo a { color: #0000ff; text-decoration: underline; }
.promo { height: 32px; flex: none; margin-top: 4px; border: 1px solid #b3b3b3; display: flex; align-items: center; padding: 5px 0 0 71px; letter-spacing: -.4px; }
.promo svg { width: 10px; height: 12px; margin: -6px 5px 0 0; }
.promo span { margin-left: 3px; letter-spacing: -.5px; }

.status { height: 28px; flex: none; display: flex; align-items: center; padding: 0 0 0 4px; }
.status > * { flex: none; }
.locate { width: 200px; height: 22px; border: 1px solid #aaa; border-radius: 3px; background: #fff; display: flex; align-items: center; color: #777; padding-left: 8px; gap: 6px; letter-spacing: -.25px; }
.locate svg { width: 13px; height: 13px; }
.msg { width: 338px; padding-left: 7px; letter-spacing: -.45px; }
.lab1 { width: 57px; letter-spacing: -.4px; }
.field { height: 22px; border: 1px solid #aaa; border-radius: 3px; background: #fff; line-height: 20px; position: relative; letter-spacing: -.35px; }
.coord { width: 112px; text-align: center; }
.mouse { width: 16px; height: 16px; margin: 0 12px 0 4px; }
.lab2 { width: 29px; letter-spacing: -.3px; }
.scale { width: 80px; padding-left: 4px; letter-spacing: -.45px; }
.scale i { position: absolute; right: 0; top: 0; width: 19px; height: 20px; border-left: 1px solid #bbb; display: flex; align-items: center; justify-content: center; background: #f7f7f7; }
.scale i::after { content: ""; border: 4px solid transparent; border-top: 5px solid #555; border-bottom: 0; }
.lock { width: 12px; height: 16px; margin: 0 8px 0 13px; }
.lab3 { width: 48px; letter-spacing: -.6px; }
.spin { padding-left: 4px; }
.mag { width: 87px; } .rot { width: 84px; }
.spin i { position: absolute; right: 0; top: 0; width: 14px; height: 20px; border-left: 1px solid #bbb; display: flex; flex-direction: column; gap: 4px; align-items: center; justify-content: center; background: #f7f7f7; }
.spin i::before { content: ""; border: 4px solid transparent; border-bottom: 5px solid #555; border-top: 0; }
.spin i::after { content: ""; border: 4px solid transparent; border-top: 5px solid #555; border-bottom: 0; }
.lab4 { width: 51px; margin-left: 9px; letter-spacing: -.35px; }
.status .chk { margin: 0 4px 0 6px; }
.lab5 { width: 53px; letter-spacing: -.4px; }
.crs { width: 16px; height: 16px; margin-right: 2px; }
.lab6 { width: 83px; letter-spacing: -.1px; }
.bubble { width: 16px; height: 16px; }

.activate { position: absolute; left: 1073px; top: 650px; color: rgba(120, 120, 120, .52); pointer-events: none; display: flex; flex-direction: column; }
.activate strong { font-weight: normal; font-size: 17.500px; line-height: 25px; letter-spacing: .85px; }
.activate span { font-size: 13px; line-height: 20px; letter-spacing: .7px; }
```
FILE: map.js
```js
// Population raster: settlement clusters as [x, y, spreadX, spreadY, count].
const clusters = [
  [770, 258, 7, 6, 110], [742, 266, 9, 3, 40], [717, 287, 8, 9, 190], [723, 312, 6, 14, 60],
  [750, 345, 18, 10, 200], [740, 350, 28, 14, 100], [738, 380, 14, 12, 190], [770, 360, 20, 12, 150],
  [790, 350, 12, 8, 70], [800, 342, 4, 4, 25], [875, 332, 2, 3, 22], [875, 365, 3, 5, 12], [698, 315, 4, 5, 15],
  [703, 430, 15, 15, 280], [745, 415, 10, 20, 280], [700, 452, 26, 14, 480], [760, 455, 28, 15, 400],
  [730, 465, 28, 12, 280], [665, 478, 16, 12, 250], [740, 498, 10, 11, 260], [795, 485, 14, 12, 210],
  [793, 507, 5, 5, 90], [666, 545, 5, 11, 300], [664, 515, 5, 7, 60], [662, 591, 8, 8, 170],
  [685, 578, 12, 8, 80], [704, 555, 12, 14, 60], [810, 448, 10, 5, 60], [629, 465, 3, 11, 50],
  [648, 437, 7, 4, 60], [620, 495, 8, 3, 20], [556, 503, 4, 4, 30], [541, 501, 4, 4, 14],
  [580, 537, 5, 3, 16], [787, 545, 4, 5, 50], [814, 522, 6, 2, 25], [838, 488, 3, 3, 12],
  [778, 555, 3, 4, 12], [590, 408, 4, 5, 12], [565, 518, 28, 18, 30], [615, 440, 14, 12, 20],
  [810, 395, 45, 35, 60], [790, 300, 45, 35, 50], [825, 330, 8, 14, 25]
];
let seed = 20317;
const rnd = () => (seed = (seed * 16807) % 2147483647) / 2147483647;
const spread = () => rnd() + rnd() + rnd() + rnd() - 2;
let d = '';
const cell = (x, y) => {
  const w = rnd() < .3 ? 2 : 1, h = rnd() < .25 ? 2 : 1;
  d += `M${Math.round(x)} ${Math.round(y)}h${w}v${h}h-${w}z`;
};
for (const [x, y, sx, sy, n] of clusters) {
  for (let k = 0; k < n; k++) cell(x + spread() * sx * 1.8, y + spread() * sy * 1.8);
}
for (let k = 0; k < 260; k++) cell(505 + rnd() * 450, 195 + rnd() * 450);
document.getElementById('population').setAttribute('d', d);
```
